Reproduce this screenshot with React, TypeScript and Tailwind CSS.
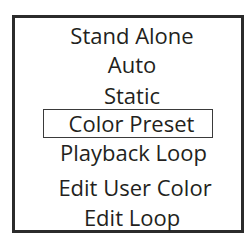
import React from "react";

export default function App() {
  const font = { fontFamily: '"Open Sans", "Noto Sans", sans-serif' };
  return (
    <div className="w-[248px] h-[243px] bg-white pt-[15px] pl-[12px]" style={font}>
      <div className="w-[232px] h-[218px] border-[3px] border-[#2b2b2b] flex flex-col text-[22px] leading-[26px] text-[#231f20] pt-[3.5px]">
        <div className="h-[29px] pl-[8px] text-center">Stand Alone</div>
        <div className="h-[31px] pl-[8px] text-center">Auto</div>
        <div className="h-[27.5px] pl-[8px] text-center">Static</div>
        <div className="ml-[28px] w-[170px] h-[29px] border-[1.5px] border-[#3a3a3a] pl-[7px] text-center">
          Color Preset
        </div>
        <div className="mt-[0.5px] h-[35px] pl-[11px] text-center">Playback Loop</div>
        <div className="h-[30px] pl-[14px] text-center">Edit User Color</div>
        <div className="h-[26px] pl-[8px] text-center">Edit Loop</div>
      </div>
    </div>
  );
}
